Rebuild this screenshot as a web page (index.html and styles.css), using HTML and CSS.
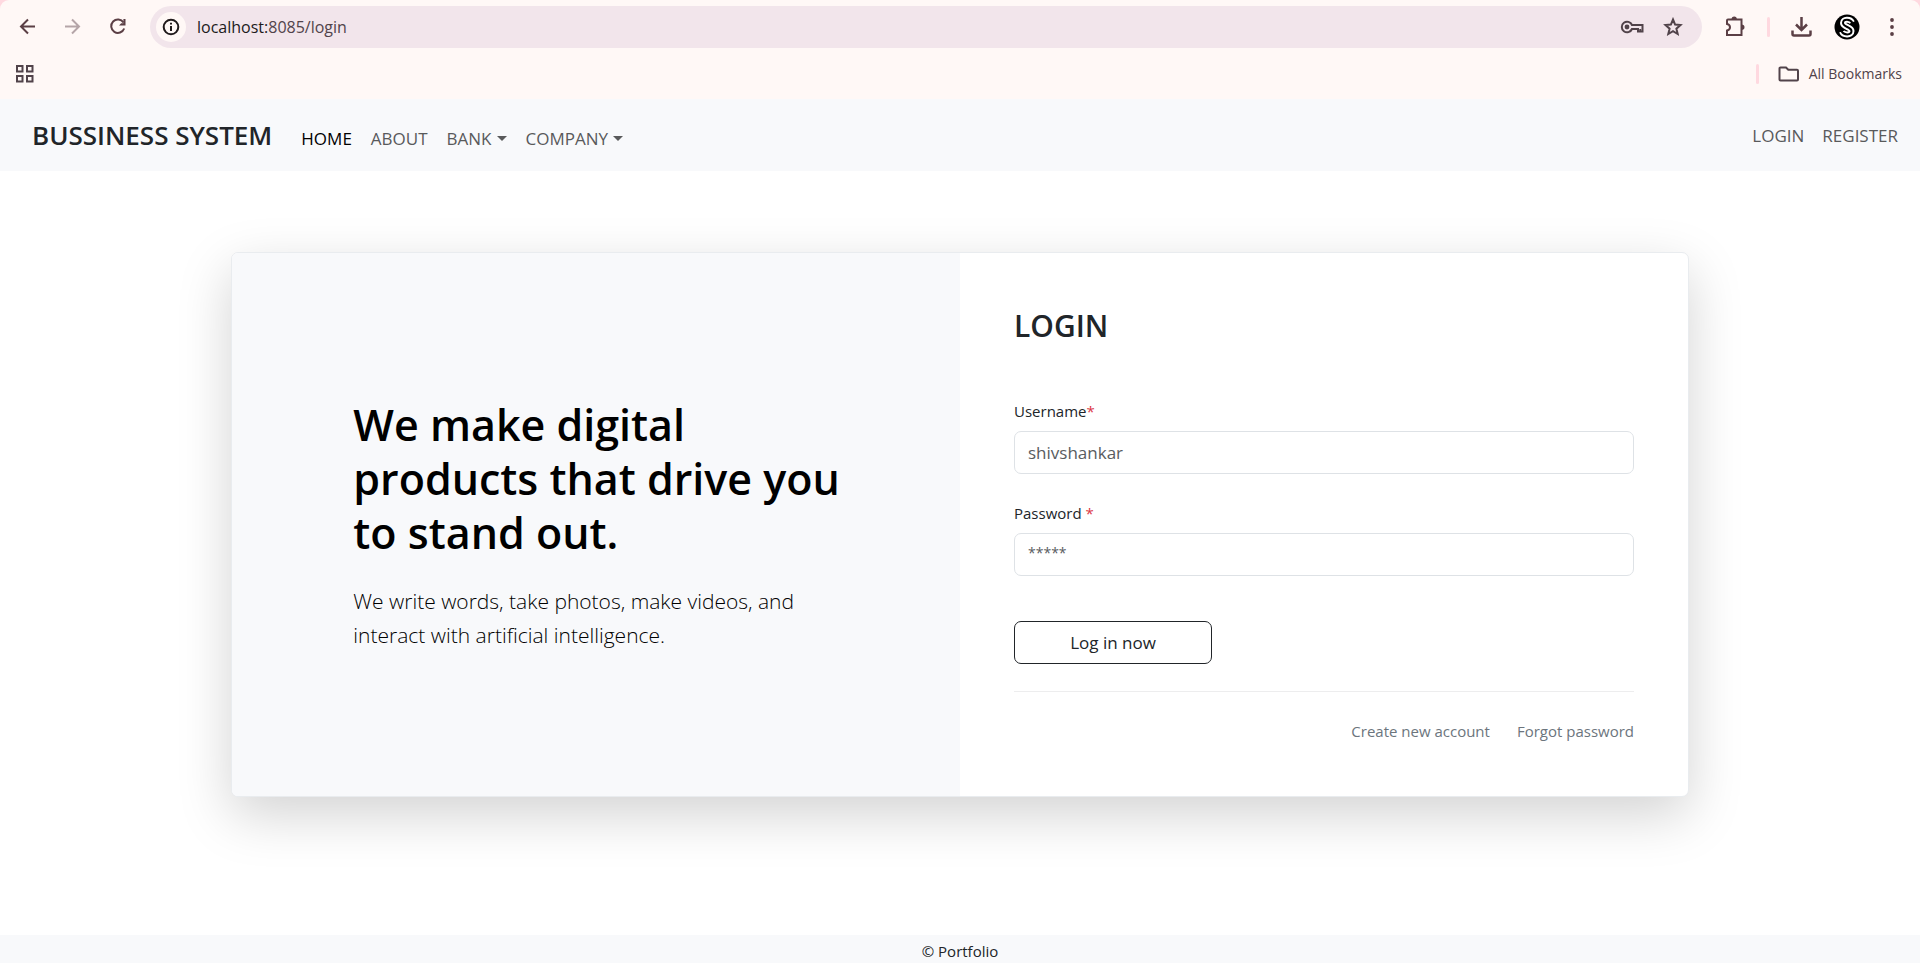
FILE: index.html
```html
<!DOCTYPE html>
<html lang="en">
<head>
<meta charset="utf-8">
<title>Login</title>
<link rel="stylesheet" href="styles.css">
</head>
<body>
<div class="browser-frame">
  <div class="browser">
    <div class="toolbar">
      <div class="nav-buttons">
        <button class="icon-button" type="button" aria-label="Back"><svg width="20" height="20" viewBox="0 0 20 20"><path d="M17 9.500H3.500M10 2.500L3 9.500L10 16.500" class="line"/></svg></button>
        <button class="icon-button muted" type="button" aria-label="Forward" disabled><svg width="20" height="20" viewBox="0 0 20 20"><path d="M2 9.500H15.500M9 2.500L16 9.500L9 16.500" class="line"/></svg></button>
        <button class="icon-button" type="button" aria-label="Reload"><svg width="20" height="20" viewBox="0 0 20 20"><path d="M15.500 5.500A6.700 6.700 0 1 0 16.200 11.500" class="line"/><path d="M17.500 2V8.500H11L13.200 6.300L15.400 6.300L15.400 2Z" fill="currentColor"/></svg></button>
      </div>
      <div class="address-bar">
        <button class="site-info" type="button" aria-label="Site information"><svg width="18" height="18" viewBox="0 0 18 18"><circle cx="9" cy="9" r="7.300" class="line"/><path d="M9 8V13M9 4.800V6.600" class="line"/></svg></button>
        <div class="address-field"><label class="host" for="address">localhost:</label><input id="address" type="text" value="8085/login"></div>
        <button class="icon-button" type="button" aria-label="Passwords"><svg width="24" height="16" viewBox="0 0 24 16"><path d="M12 6H22.500V12.500H18V10H12A5.300 5.300 0 1 1 12 6Z" class="line"/><path d="M20.300 10V13" class="line"/><circle cx="7" cy="8" r="2.400" fill="currentColor"/></svg></button>
        <button class="icon-button" type="button" aria-label="Bookmark this page"><svg width="20" height="20" viewBox="0 0 20 20"><path d="M10 2.500L12.100 7.600L17.500 8L13.400 11.700L14.700 17L10 14.200L5.300 17L6.600 11.700L2.500 8L7.900 7.600Z" class="line"/></svg></button>
      </div>
      <div class="tools">
        <button class="icon-button" type="button" aria-label="Extensions"><svg width="22" height="22" viewBox="0 0 22 22"><path d="M4 3.500H17.500V19H3V14.500Q6 14 6 11.300Q6 8.600 3 8V4.500Q3 3.500 4 3.500Z" class="line"/><path d="M7.500 3.500A2.700 2.900 0 0 1 12.900 3.500ZM17.500 8.500A3 2.700 0 0 1 17.500 13.900Z" fill="currentColor"/></svg></button>
        <span class="divider"></span>
        <button class="icon-button" type="button" aria-label="Downloads"><svg width="22" height="22" viewBox="0 0 22 22"><path d="M10.500 1V14M5 8.500L10.500 14L16 8.500M1.500 14.500V18Q1.500 19.500 3 19.500H18Q19.500 19.500 19.500 18V14.500" class="line heavy"/></svg></button>
        <button class="icon-button" type="button" aria-label="Profile"><svg width="26" height="26" viewBox="0 0 26 26"><circle cx="13" cy="13" r="12.500" fill="#000"/><path d="M18 8.500C16 4.500 9 5 9 9C9 13 17.500 13 17.500 17C17.500 21.500 9.500 21.500 8 17.500" class="ribbon-outer"/><path d="M18.500 9C16 4.500 9 5 9 9C9 13 17.500 13 17.500 17C17.500 21.500 9.500 21.500 7.500 17" class="ribbon-inner"/></svg></button>
        <button class="icon-button menu" type="button" aria-label="Menu"><svg width="6" height="20" viewBox="0 0 6 20"><g fill="currentColor"><circle cx="3" cy="3" r="1.900"/><circle cx="3" cy="10" r="1.900"/><circle cx="3" cy="17" r="1.900"/></g></svg></button>
      </div>
    </div>
    <div class="bookmarks">
      <button class="icon-button" type="button" aria-label="Apps"><svg width="20" height="20" viewBox="0 0 20 20"><path d="M2 2H7.500V7.500H2ZM12 2H17.500V7.500H12ZM2 12H7.500V17.500H2ZM12 12H17.500V17.500H12Z" class="line"/></svg></button>
      <div class="all-bookmarks">
        <span class="divider"></span>
        <button class="bookmark-button" type="button"><svg width="22" height="18" viewBox="0 0 22 18"><path d="M2.500 2.500H8L10.300 4.800H19Q20 4.800 20 5.800V14.500Q20 15.500 19 15.500H2.500Q1.500 15.500 1.500 14.500V3.500Q1.500 2.500 2.500 2.500Z" class="line"/></svg>All Bookmarks</button>
      </div>
    </div>
  </div>
</div>

<nav class="site-nav">
  <div class="nav-group main-group">
    <a class="brand" href="#">BUSSINESS SYSTEM</a>
    <a class="nav-link active" href="#">HOME</a>
    <a class="nav-link" href="#">ABOUT</a>
    <a class="nav-link dropdown" href="#">BANK</a>
    <a class="nav-link dropdown" href="#">COMPANY</a>
  </div>
  <div class="nav-group">
    <a class="nav-link" href="#">LOGIN</a>
    <a class="nav-link" href="#">REGISTER</a>
  </div>
</nav>

<main class="page">
  <div class="card">
    <section class="intro">
      <h1 class="headline">We make digital products that drive you to stand out.</h1>
      <p class="lead">We write words, take photos, make videos, and interact with artificial intelligence.</p>
    </section>
    <section class="login">
      <h2 class="title">LOGIN</h2>
      <form class="form">
        <div class="field">
          <label for="username">Username<span class="required">*</span></label>
          <input id="username" type="text" placeholder="shivshankar">
        </div>
        <div class="field">
          <label for="password">Password <span class="required">*</span></label>
          <input id="password" type="password" placeholder="*****">
        </div>
        <button class="submit" type="button">Log in now</button>
      </form>
      <div class="links">
        <a href="#">Create new account</a>
        <a href="#">Forgot password</a>
      </div>
    </section>
  </div>
</main>

<footer class="footer">© Portfolio</footer>
</body>
</html>
```
FILE: styles.css
```css
* { box-sizing: border-box; }
body {
  margin: 0;
  min-height: 100vh;
  display: flex;
  flex-direction: column;
  font-family: "Open Sans", "Noto Sans", sans-serif;
  font-size: 17px;
  line-height: 27px;
  color: #212529;
  background: #fff;
}
h1, h2, p { margin: 0; }
a { color: inherit; text-decoration: none; }
button, input { font: inherit; color: inherit; }
svg { display: block; }
.line { fill: none; stroke: currentColor; stroke-width: 2; }
.heavy { stroke-width: 2.5; }
.ribbon-outer { fill: none; stroke: #fff; stroke-width: 6; }
.ribbon-inner { fill: none; stroke: #000; stroke-width: 2; }

/* Browser toolbar */
.browser-frame { background: #ffd9e0; }
.browser { background: #fff8f6; border-radius: 9px 9px 0 0; color: #5b3f45; }
.toolbar { display: flex; align-items: center; height: 54px; padding: 0 25px 0 16px; }
.icon-button { display: flex; padding: 0; border: 0; background: none; color: inherit; }
.nav-buttons { display: flex; gap: 25px; padding: 0 22px 0 2px; }
.muted { color: #b5a5a8; }
.address-bar {
  flex: 1; display: flex; align-items: center; gap: 19px;
  height: 42px; padding: 0 19px 0 6px; border-radius: 21px; background: #f2e5eb; color: #51434a;
}
.site-info {
  display: flex; align-items: center; justify-content: center;
  width: 30px; height: 30px; padding: 0; border: 0; border-radius: 50%;
  background: #fff8f6; color: #201a1b;
}
.address-field { flex: 1; display: flex; align-items: center; margin-left: -8px; }
.address-field input { flex: 1; min-width: 0; padding: 0; border: 0; background: none; }
.host { color: #201a1b; }
.address-field, .address-field input { font-size: 16px; }
.tools { display: flex; align-items: center; gap: 21px; padding-left: 22px; }
.menu { margin-left: 8px; }
.divider { width: 3px; height: 20px; border-radius: 2px; background: #ffd9e0; }
.bookmarks { display: flex; align-items: center; justify-content: space-between; height: 45px; padding: 0 18px 6px 15px; color: #51434a; }
.all-bookmarks { display: flex; align-items: center; gap: 19px; }
.bookmark-button { display: flex; align-items: center; gap: 9px; padding: 0; border: 0; background: none; font-size: 14px; }

/* Site navigation */
.site-nav {
  display: flex; align-items: center; justify-content: space-between;
  min-height: 72px; padding: 0 22px 0 32px; background: #f8f9fb; color: #595a5b;
}
.nav-group { display: flex; align-items: baseline; gap: 18px; }
.main-group { gap: 19px; }
.brand { margin-right: 10px; font-size: 26px; line-height: 40px; font-weight: 600; color: #212529; }
.active { color: #000; }
.dropdown::after {
  content: ""; display: inline-block; margin-left: 5px; vertical-align: 4px;
  border: 5px solid transparent; border-top-color: currentColor; border-bottom: 0;
}

/* Login card */
.page { flex: 1; padding: 81px 24px; }
.card {
  display: grid; grid-template-columns: 1fr 1fr;
  max-width: 1458px; margin: 0 auto; overflow: hidden;
  border: 1px solid #e9ecef; border-radius: 7px; background: #fff;
  box-shadow: 0 18px 54px rgba(0, 0, 0, .175);
}
.intro { display: flex; flex-direction: column; justify-content: center; gap: 24px; padding: 54px 14% 54px 16.666%; background: #f8f9fb; color: #000; }
.headline { font-size: 43px; line-height: 54px; font-weight: 600; }
.lead { max-width: 486px; font-size: 21px; line-height: 34px; font-weight: 300; }
.login { padding: 54px 54px 53px; }
.title { margin-bottom: 54px; font-size: 30px; line-height: 38px; font-weight: 600; }
.form { display: flex; flex-direction: column; gap: 27px; padding-bottom: 27px; border-bottom: 1px solid #ededee; }
.field { display: flex; flex-direction: column; gap: 8px; }
.field label { font-size: 15px; line-height: 24px; }
.required { color: #dc3545; }
.field input { height: 43px; padding: 0 13px; border: 1px solid #dee2e6; border-radius: 7px; background: #fff; }
.field input::placeholder { color: #595c5f; opacity: 1; }
.field input[type="password"] { padding-bottom: 4px; font-size: 14px; }
.submit { align-self: flex-start; width: 198px; height: 43px; margin-top: 18px; border: 1px solid #212529; border-radius: 7px; background: #fff; }
.links { display: flex; justify-content: flex-end; gap: 27px; padding-top: 27px; font-size: 15px; line-height: 24px; color: #6c757d; }
.footer { padding-top: 4px; background: #f8f9fb; font-size: 15px; line-height: 24px; text-align: center; }
```
